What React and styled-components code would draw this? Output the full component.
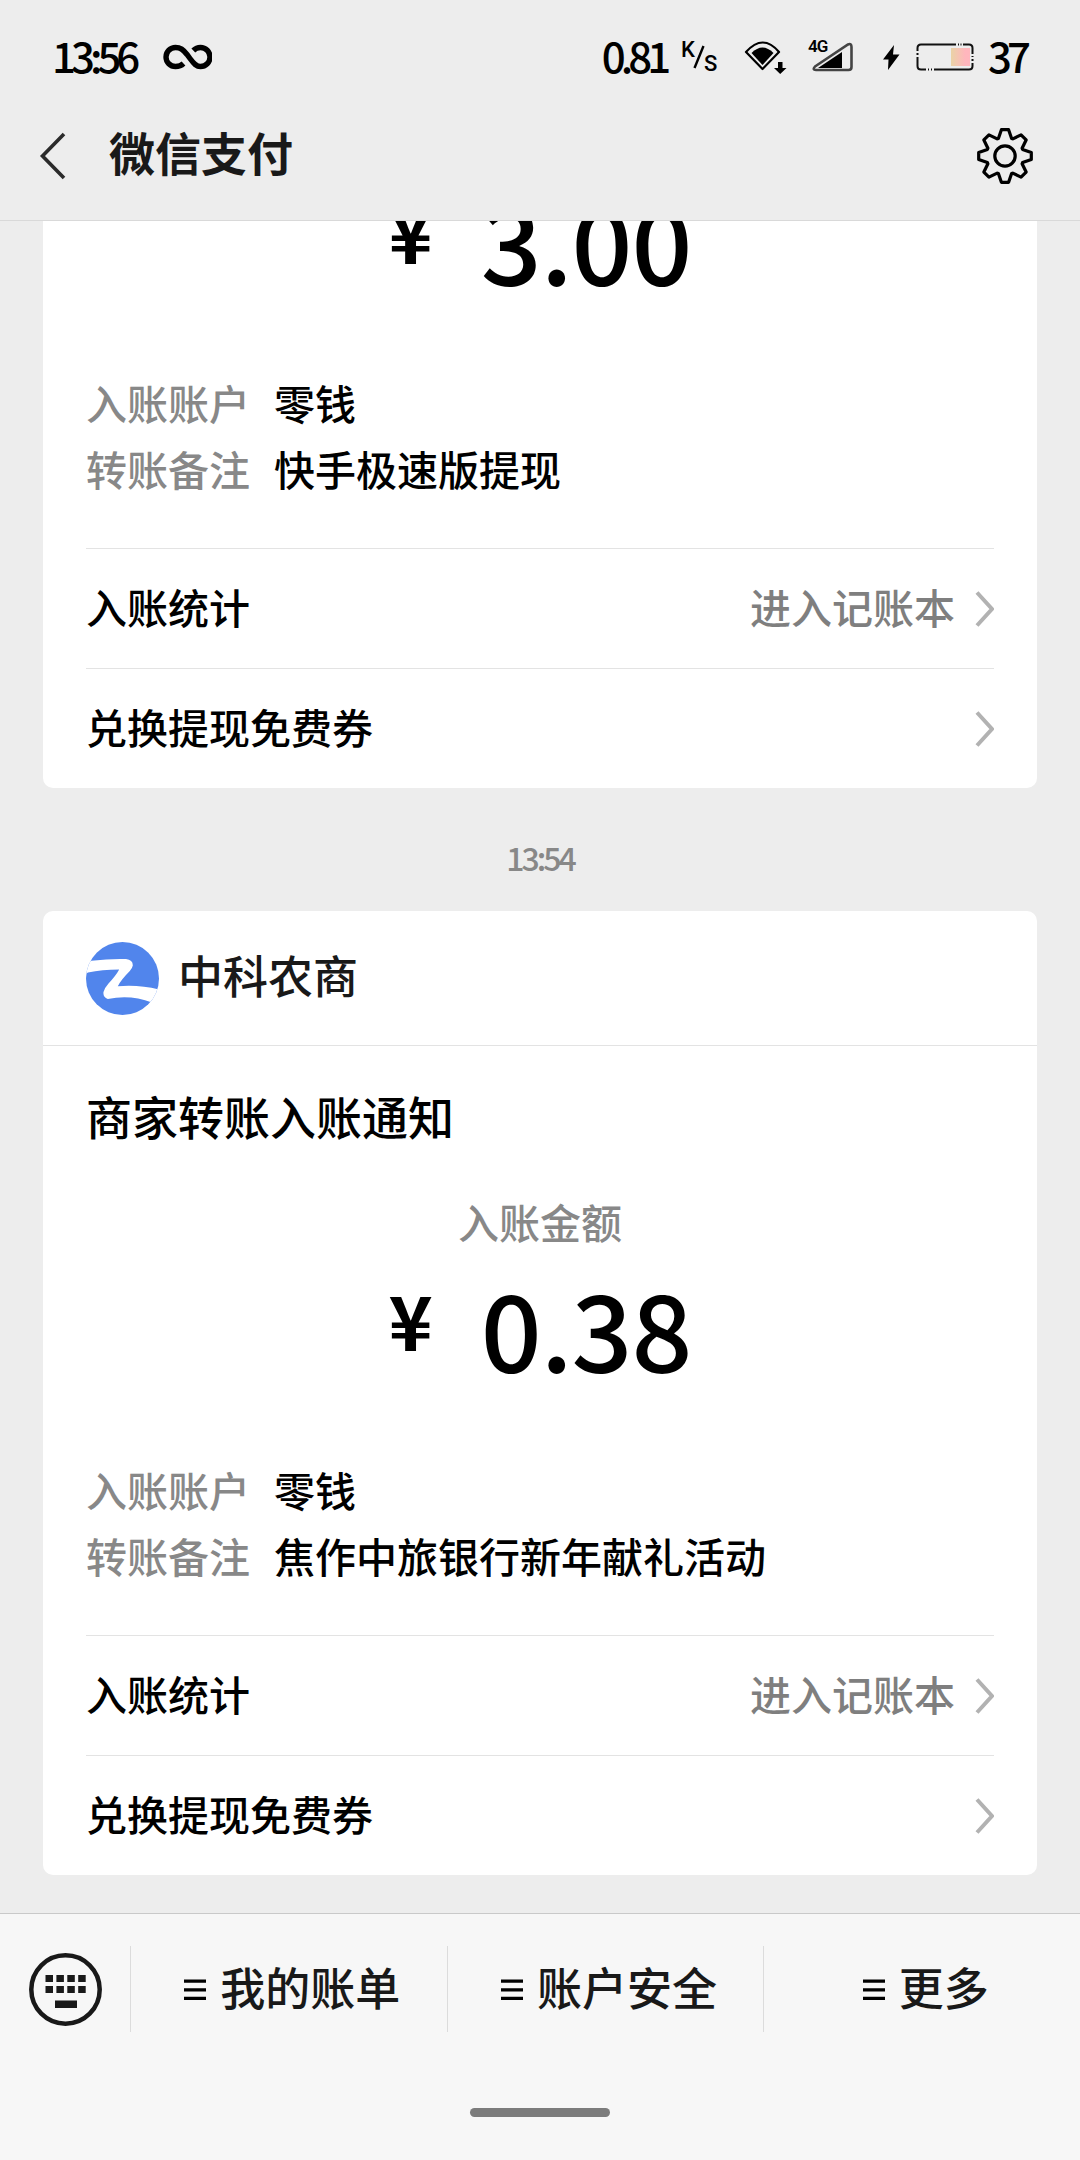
import React from "react";
import styled, { createGlobalStyle } from "styled-components";

const GlobalStyle = createGlobalStyle`
  * {
    box-sizing: border-box;
  }
  body {
    margin: 0;
    background: #ededed;
    font-family: "Noto Sans CJK SC", "Noto Sans", sans-serif;
    font-weight: 500;
    color: #000;
  }
`;

const Screen = styled.div`
  display: flex;
  flex-direction: column;
  width: 1080px;
  height: 2160px;
  overflow: hidden;
`;

const Header = styled.header`
  flex: none;
  height: 221px;
  border-bottom: 1px solid #d9d9d9;
`;

const StatusBar = styled.div`
  display: flex;
  align-items: center;
  justify-content: space-between;
  height: 110px;
  padding: 4px 54px 0 52px;
`;

const StatusGroup = styled.div`
  display: flex;
  align-items: center;
`;

const StatusText = styled.span`
  font-size: 42px;
  line-height: 42px;
  font-weight: 500;
  letter-spacing: -5px;
  margin-top: -4px;
  white-space: nowrap;
`;

const Unit = styled.span`
  display: flex;
  width: 36px;
  height: 34px;
  margin: 0 27px 0 15px;
  font-family: Roboto, sans-serif;
  font-size: 22px;
  line-height: 22px;
  sup,
  sub {
    font-size: inherit;
    line-height: 22px;
    vertical-align: baseline;
  }
  sup {
    align-self: flex-start;
    margin-top: -1px;
  }
  sub {
    align-self: flex-end;
    margin-bottom: -1px;
  }
  svg {
    flex: none;
    margin: 4px -1px 0 -2px;
  }
`;

const NavBar = styled.div`
  display: flex;
  align-items: center;
  height: 91px;
  padding: 0 46px 0 39px;
  h1 {
    flex: 1;
    margin: -9px 0 0 43px;
    color: #191919;
    font-size: 46px;
    line-height: 46px;
    font-weight: 700;
  }
`;

const Chat = styled.main`
  flex: 1;
  min-height: 0;
  display: flex;
  flex-direction: column;
  justify-content: flex-end;
  overflow: hidden;
  padding: 0 43px 38px;
`;

const Timestamp = styled.time`
  flex: none;
  height: 123px;
  padding-top: 53px;
  color: #888;
  font-size: 32px;
  line-height: 32px;
  font-weight: 500;
  letter-spacing: -3px;
  text-align: center;
`;

const Card = styled.article`
  flex: none;
  overflow: hidden;
  border-radius: 10px;
  background: #fff;
`;

const CardHeader = styled.div`
  display: flex;
  align-items: center;
  gap: 19px;
  height: 135px;
  padding: 0 43px;
  border-bottom: 1px solid #e3e3e3;
  color: #191919;
  font-size: 45px;
  line-height: 45px;
  span {
    margin-top: -7px;
  }
`;

const CardBody = styled.div`
  padding: 46px 43px 0;
`;

const Title = styled.h2`
  margin: 0;
  font-size: 46px;
  line-height: 46px;
  font-weight: 500;
`;

const AmountLabel = styled.div`
  margin-top: 63px;
  color: #888;
  font-size: 41px;
  line-height: 40px;
  text-align: center;
`;

const Amount = styled.div`
  display: flex;
  justify-content: center;
  height: 108px;
  margin-top: 40px;
  font-size: 107px;
  line-height: 92px;
  letter-spacing: -1px;
  span {
    margin-right: 49px;
    font-size: 75px;
    line-height: 76px;
    font-weight: 700;
  }
`;

const Details = styled.dl`
  display: grid;
  grid-template-columns: 188px 1fr;
  margin: 67px 0 47px;
  font-size: 41px;
  line-height: 66px;
  dt {
    color: #888;
  }
  dd {
    margin: 0;
  }
`;

const LinkRow = styled.div`
  display: flex;
  align-items: center;
  height: 120px;
  border-top: 1px solid #e3e3e3;
  font-size: 41px;
  line-height: 41px;
  span {
    margin-top: -5px;
  }
  svg {
    margin-left: 20px;
  }
`;

const Hint = styled.span`
  margin-left: auto;
  color: #7f7f7f;
`;

const Spacer = styled.i`
  flex: 1;
`;

const Footer = styled.footer`
  flex: none;
  display: flex;
  flex-direction: column;
  align-items: center;
  height: 247px;
  border-top: 1px solid #c9c9c9;
  background: #f7f7f7;
`;

const MenuBar = styled.nav`
  display: flex;
  width: 100%;
  height: 86px;
  margin-top: 32px;
`;

const KeyboardButton = styled.div`
  display: flex;
  align-items: center;
  width: 130px;
  padding-left: 28px;
`;

const MenuItem = styled.div`
  flex: 1;
  display: flex;
  align-items: center;
  justify-content: center;
  gap: 14px;
  padding-left: 7px;
  border-left: 1px solid #dcdcdc;
  color: #191919;
  font-size: 45px;
  line-height: 45px;
  span {
    margin-top: -5px;
  }
`;

const HomeIndicator = styled.div`
  width: 140px;
  height: 9px;
  margin-top: 76px;
  border-radius: 5px;
  background: #7c7c7c;
`;

const Infinity = styled.svg`
  margin-left: 28px;
`;

const InfinityIcon = () => (
  <Infinity width="49" height="26" viewBox="0 0 49 26" fill="none" stroke="#000" strokeWidth="5.4">
    <path d="M20.5 19.5C18 22 15.5 22.5 12.5 22.5a9.5 9.5 0 1 1 0-19c5 0 7.500 2 11.500 7l3 4c4 5.500 6.500 8 10.500 8a9.500 9.500 0 1 0 0-19c-3 0-5 .8-7.200 3" />
  </Infinity>
);

const WifiIcon = () => (
  <svg width="44" height="34" viewBox="0 0 44 34">
    <path d="M2 12Q19 -7 35 12L18.500 29Z" fill="none" stroke="#000" strokeWidth="2.200" strokeLinejoin="round" />
    <path d="M7.500 13Q18.500 2 29.500 13L18.500 25Z" />
    <path d="M34 22h4.500v6h4L36.200 34 30 28h4Z" />
  </svg>
);

const SignalWrap = styled.div`
  position: relative;
  display: flex;
  margin: 0 28px 0 24px;
  small {
    position: absolute;
    top: -4px;
    left: -4px;
    font-family: Roboto, sans-serif;
    font-size: 17px;
    line-height: 17px;
    letter-spacing: -1px;
    font-weight: 600;
  }
`;

const SignalIcon = () => (
  <SignalWrap>
    <small>4G</small>
    <svg width="42" height="30" viewBox="0 0 42 30">
      <path
        d="M3 24.500 36 2.500Q39.500 1 39.500 5V25Q39.500 28 36.500 28H4Q0 28 3 24.500Z"
        fill="none"
        stroke="#444"
        strokeWidth="2.600"
      />
      <path d="M6 26 30 10V26Z" />
    </svg>
  </SignalWrap>
);

const BoltIcon = () => (
  <svg width="18" height="25" viewBox="0 0 18 25">
    <path d="M12 0 1 14.500h5.500L6 25 17.500 9.500H11Z" />
  </svg>
);

const Battery = styled.svg`
  margin: 0 13px 0 16px;
`;

const BatteryIcon = () => (
  <Battery width="59" height="28" viewBox="0 0 59 28">
    <defs>
      <linearGradient id="charge">
        <stop offset="0" stopColor="#ead3a6" />
        <stop offset=".75" stopColor="#ffb6bd" />
      </linearGradient>
    </defs>
    <g fill="none" stroke="#111" strokeWidth="2">
      <path d="M1.500 8V5q0-3.500 3.500-3.500H40M47 1.500h6q3.500 0 3.500 3.500v6M56.500 20v3q0 3.500-3.500 3.500H18M10 26.500H5q-3.500 0-3.500-3.500v-9" />
      <path d="M42 1.500h1M44.500 1.500h1M56.500 13v1M56.500 16v2M12 26.500h1M15 26.500h1M1.500 10v2" />
    </g>
    <rect x="35" y="5" width="19" height="18" fill="url(#charge)" />
  </Battery>
);

const BackIcon = () => (
  <svg width="27" height="48" viewBox="0 0 27 48" fill="none" stroke="#2b2b2b" strokeWidth="3.600">
    <path d="M25 2 3.500 24 25 46" />
  </svg>
);

// one tooth of the gear, turned eight times round the centre
const tooth = [[-6.6, -17.6], [-3.6, -26.3], [3.6, -26.3], [6.6, -17.6]];
const gearPoints = Array.from({ length: 8 }, (_, i) => {
  const a = (i * Math.PI) / 4;
  return tooth
    .map(([x, y]) =>
      [x * Math.cos(a) - y * Math.sin(a), x * Math.sin(a) + y * Math.cos(a)]
        .map(n => n.toFixed(2))
        .join(",")
    )
    .join(" ");
}).join(" ");

const GearIcon = () => (
  <svg width="58" height="58" viewBox="-29 -29 58 58" fill="none" stroke="#000" strokeWidth="3.200" strokeLinejoin="round">
    <polygon points={gearPoints} />
    <circle r="10.200" />
  </svg>
);

const ArrowIcon = () => (
  <svg width="19" height="36" viewBox="0 0 19 36" fill="none" stroke="#b2b2b2" strokeWidth="4">
    <path d="M2 1.500 17 18 2 34.500" />
  </svg>
);

const MerchantLogo = () => (
  <svg width="73" height="73" viewBox="0 0 73 73">
    <clipPath id="logo">
      <circle cx="36.500" cy="36.500" r="36.500" />
    </clipPath>
    <g clipPath="url(#logo)">
      <rect width="73" height="73" fill="#5185ec" />
      <path
        d="M-2 19.500 5.700 18.700Q24 16.500 40 17q7 1 6.800 6.500-.4 2.500-3 5.500-9 9-12 15.300 22-2 44 4L66 60.500Q44 52 21.800 57q-5-2-4.300-7 1-4 5-8.500Q30 33.500 33.200 27.500 16 27.500 2 30.500L-2 33Z"
        fill="#fff"
      />
    </g>
  </svg>
);

const keys = [0, 1, 2, 3];

const KeyboardIcon = () => (
  <svg width="75" height="75" viewBox="0 0 75 75" fill="#191919">
    <circle cx="37.500" cy="37.500" r="34.200" fill="none" stroke="#191919" strokeWidth="4.500" />
    {keys.map(i => (
      <g key={i}>
        <rect x={17.5 + i * 10.9} y="23" width="7.500" height="7" />
        <rect x={17.5 + i * 10.9} y="34" width="7.500" height="7" />
      </g>
    ))}
    <rect x="27" y="48.500" width="22" height="7.500" />
  </svg>
);

const MenuIcon = () => (
  <svg width="22" height="24" viewBox="0 0 22 24">
    <path d="M0 2.500h22v3.200H0zM0 11.200h22v3.200H0zM0 19.800h22v3.200H0z" />
  </svg>
);

const PaymentCard = ({ merchant, amount, note }) => (
  <Card>
    {merchant && (
      <CardHeader>
        <MerchantLogo />
        <span>{merchant}</span>
      </CardHeader>
    )}
    <CardBody>
      {merchant && <Title>商家转账入账通知</Title>}
      {merchant && <AmountLabel>入账金额</AmountLabel>}
      <Amount>
        <span>¥</span>
        {amount}
      </Amount>
      <Details>
        <dt>入账账户</dt>
        <dd>零钱</dd>
        <dt>转账备注</dt>
        <dd>{note}</dd>
      </Details>
      <LinkRow>
        <span>入账统计</span>
        <Hint>进入记账本</Hint>
        <ArrowIcon />
      </LinkRow>
      <LinkRow>
        <span>兑换提现免费券</span>
        <Spacer />
        <ArrowIcon />
      </LinkRow>
    </CardBody>
  </Card>
);

const App = () => (
  <Screen>
    <GlobalStyle />
    <Header>
      <StatusBar>
        <StatusGroup>
          <StatusText>13:56</StatusText>
          <InfinityIcon />
        </StatusGroup>
        <StatusGroup>
          <StatusText>0.81</StatusText>
          <Unit>
            <sup>K</sup>
            <svg width="12" height="26" viewBox="0 0 12 26">
              <path d="M10.500 2 1.500 24" stroke="#000" strokeWidth="2.400" />
            </svg>
            <sub>S</sub>
          </Unit>
          <WifiIcon />
          <SignalIcon />
          <BoltIcon />
          <BatteryIcon />
          <StatusText>37</StatusText>
        </StatusGroup>
      </StatusBar>
      <NavBar>
        <BackIcon />
        <h1>微信支付</h1>
        <GearIcon />
      </NavBar>
    </Header>
    <Chat>
      <PaymentCard amount="3.00" note="快手极速版提现" />
      <Timestamp>13:54</Timestamp>
      <PaymentCard merchant="中科农商" amount="0.38" note="焦作中旅银行新年献礼活动" />
    </Chat>
    <Footer>
      <MenuBar>
        <KeyboardButton>
          <KeyboardIcon />
        </KeyboardButton>
        {["我的账单", "账户安全", "更多"].map(label => (
          <MenuItem key={label}>
            <MenuIcon />
            <span>{label}</span>
          </MenuItem>
        ))}
      </MenuBar>
      <HomeIndicator />
    </Footer>
  </Screen>
);

export default App;
